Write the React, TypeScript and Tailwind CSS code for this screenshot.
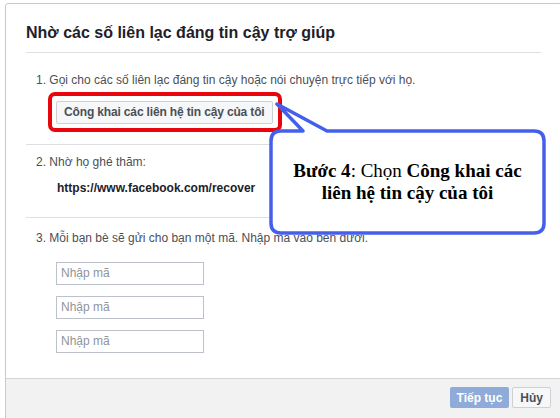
import React from "react";

export default function App() {
  const sans = { fontFamily: '"Liberation Sans", Arial, sans-serif' };
  return (
    <div className="relative w-[560px] h-[418px] overflow-hidden bg-white" style={sans}>
      <div className="absolute left-[5px] top-[3px] w-[557px] h-[440px] border border-[#c9c9c9] rounded-[3px] bg-white flex flex-col">
        <div className="px-[20px] pt-[19px] flex-1">
          <div className="pb-[9px] border-b border-[#dddfe2]">
            <h2 className="text-[16px] leading-[20px] font-bold text-[#1d2129]">
              Nhờ các số liên lạc đáng tin cậy trợ giúp
            </h2>
          </div>
          <div className="border-b border-[#dddfe2] pt-[19px] pb-[20px] pl-[10px]">
            <p className="text-[12px] leading-[16px] text-[#4b4f56]">
              1. Gọi cho các số liên lạc đáng tin cậy hoặc nói chuyện trực tiếp với họ.
            </p>
            <div className="mt-[11px] pl-[20px]">
              <div className="relative inline-block">
                <button className="h-[23px] px-[7px] text-[12px] font-bold tracking-[-0.15px] text-[#4b4f56] bg-[#f6f7f9] border border-[#ced0d4] rounded-[2px]">
                  Công khai các liên hệ tin cậy của tôi
                </button>
                <div className="absolute left-[-8px] right-[-9px] top-[-7px] bottom-[-8px] border-[4px] border-[#e8060c] rounded-[7px]" />
              </div>
            </div>
          </div>
          <div className="border-b border-[#dddfe2] pt-[9px] pb-[21px] pl-[10px]">
            <p className="text-[12px] leading-[16px] text-[#4b4f56]">2. Nhờ họ ghé thăm:</p>
            <p className="mt-[10px] pl-[21px] text-[12px] leading-[16px] font-bold text-[#1d2129]">
              https://www.facebook.com/recover
            </p>
          </div>
          <div className="pt-[12px] pl-[10px]">
            <p className="text-[12px] leading-[16px] text-[#4b4f56]">
              3. Mỗi bạn bè sẽ gửi cho bạn một mã. Nhập mã vào bên dưới.
            </p>
            <div className="mt-[16px] pl-[20px] flex flex-col gap-[11px]">
              {[0, 1, 2].map((i) => (
                <input
                  key={i}
                  placeholder="Nhập mã"
                  className="w-[148px] h-[23px] px-[4px] text-[12px] border border-[#bdc1c9] text-[#1d2129] placeholder:text-[#90949c] outline-none"
                  style={sans}
                />
              ))}
            </div>
          </div>
        </div>
        <div className="h-[64px] shrink-0 bg-[#f2f2f2] border-t border-[#d3d3d3] px-[10px] pt-[8px] flex justify-end gap-[3px]">
          <button className="h-[21px] px-[7px] text-[12px] font-bold text-white bg-[#8eabd9] rounded-[2px]">
            Tiếp tục
          </button>
          <button className="h-[21px] px-[7px] text-[12px] font-bold text-[#4b4f56] bg-[#f6f7f9] border border-[#ced0d4] rounded-[2px]">
            Hủy
          </button>
        </div>
      </div>

      <svg className="absolute left-0 top-0" width="560" height="418" viewBox="0 0 560 418">
        <path
          d="M 303 131 L 277 104 L 327 131 L 534 131 Q 544 131 544 141 L 544 223 Q 544 233 534 233 L 281 233 Q 271 233 271 223 L 271 141 Q 271 131 281 131 Z"
          fill="white"
          stroke="#4460ea"
          strokeWidth="3.5"
          strokeLinejoin="round"
        />
      </svg>
      <div
        className="absolute left-[271px] top-[160px] w-[273px] text-center text-[19px] leading-[22px] text-black"
        style={{ fontFamily: '"Liberation Serif", "Times New Roman", serif' }}
      >
        <div>
          <b>Bước 4</b>: Chọn <b>Công khai các</b>
        </div>
        <div>
          <b>liên hệ tin cậy của tôi</b>
        </div>
      </div>
    </div>
  );
}
